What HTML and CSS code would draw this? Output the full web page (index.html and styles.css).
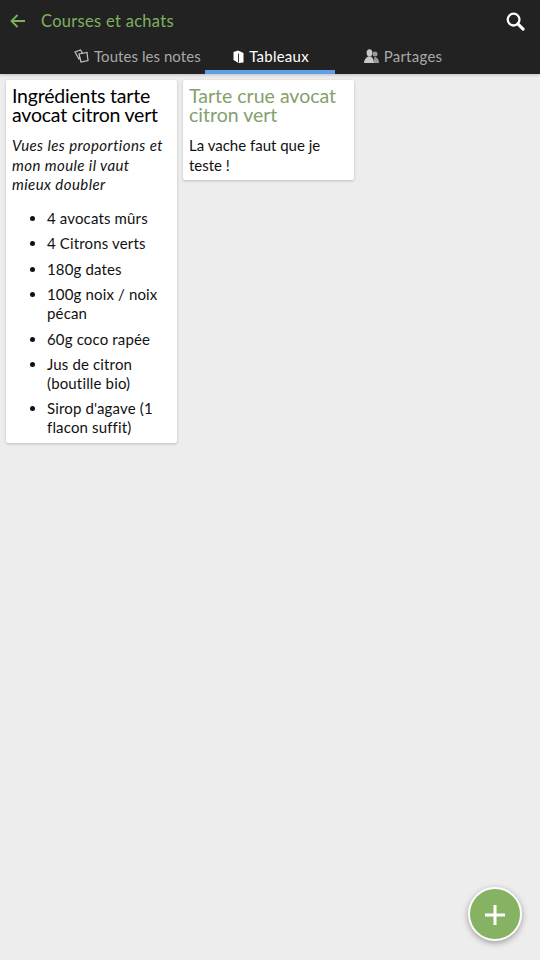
FILE: index.html
```html
<!DOCTYPE html>
<html lang="fr">
<head>
<meta charset="utf-8">
<title>Courses et achats</title>
<link rel="stylesheet" href="styles.css">
</head>
<body>
<header class="appbar">
  <div class="toolbar">
    <svg class="back" viewBox="0 0 15 14" width="15" height="14"><path d="M15 7H1.500M7.500 1 1.500 7l6 6" fill="none" stroke="#7db25f" stroke-width="1.800"/></svg>
    <span class="heading">Courses et achats</span>
    <svg class="search" viewBox="0 0 20 20" width="19" height="19"><circle cx="8" cy="8" r="6.200" fill="none" stroke="#fff" stroke-width="2.400"/><path d="M12.500 12.500 18 18" stroke="#fff" stroke-width="3.200" stroke-linecap="round"/></svg>
  </div>
  <nav class="tabs">
    <div class="tab tab-first">
      <svg class="tab-icon" viewBox="0 0 15 14" width="15" height="14"><path d="M1 3 6.500 1 9 5 5 10Z" fill="none" stroke="#c4c4c4" stroke-width="1.200"/><path d="M5 5 13 3.500 14 11.500 7 13Z" fill="#222" stroke="#c4c4c4" stroke-width="1.200"/></svg>
      <span>Toutes les notes</span>
    </div>
    <div class="tab active">
      <svg class="tab-icon" viewBox="0 0 11 13" width="11" height="13"><path d="M0.500 2 5 0.500 10.500 3V12.500L5.500 13 0.500 10Z" fill="#fff"/><path d="M5.500 3.500V12.500" stroke="#222" stroke-width=".9"/></svg>
      <span>Tableaux</span>
    </div>
    <div class="tab tab-last">
      <svg class="tab-icon" viewBox="0 0 15 14" width="15" height="14"><circle cx="11" cy="5" r="2.500" fill="#9a9a9a"/><path d="M10 14c0-2 0-4 .5-6 2.500 0 4.500 2.500 4.500 6Z" fill="#9a9a9a"/><ellipse cx="5.500" cy="3.800" rx="2.900" ry="3.600" fill="#c8c8c8"/><path d="M0 14c0-3 1.500-5 4-6.500h3c2 1.500 3 3.500 3 6.500Z" fill="#c8c8c8"/></svg>
      <span>Partages</span>
    </div>
  </nav>
</header>
<main class="board">
  <article class="card">
    <h2 class="card-title tight">Ingrédients tarte avocat citron vert</h2>
    <p class="card-text"><em class="note">Vues les proportions et mon moule il vaut mieux doubler</em></p>
    <ul class="card-list">
      <li>4 avocats mûrs</li>
      <li>4 Citrons verts</li>
      <li>180g dates</li>
      <li>100g noix / noix pécan</li>
      <li>60g coco rapée</li>
      <li>Jus de citron (boutille bio)</li>
      <li>Sirop d'agave (1 flacon suffit)</li>
    </ul>
  </article>
  <article class="card">
    <h2 class="card-title green">Tarte crue avocat citron vert</h2>
    <p class="card-text">La vache faut que je teste !</p>
  </article>
</main>
<button class="fab" type="button" aria-label="Ajouter"><svg viewBox="0 0 20 20" width="20" height="20"><path d="M10 0V20M0 10H20" stroke="#fff" stroke-width="3"/></svg></button>
</body>
</html>
```
FILE: styles.css
```css
* { box-sizing: border-box; }
html, body { height: 100%; }
body {
  margin: 0;
  background: #ededed;
  font-family: Lato, "Open Sans", sans-serif;
  color: #111;
  overflow: hidden;
}
.appbar {
  height: 74px;
  background: #222;
  display: flex;
  flex-direction: column;
  box-shadow: 0 1px 3px rgba(0,0,0,.2);
}
.toolbar {
  height: 42px;
  display: flex;
  align-items: center;
  padding: 0 15px 0 10px;
}
.back { flex: none; }
.heading {
  margin-left: 16px;
  font-size: 16.500px;
  letter-spacing: .3px;
  color: #7db25f;
  flex: 1;
}
.tabs {
  height: 32px;
  display: flex;
  justify-content: center;
}
.tab {
  width: 130px;
  display: flex;
  align-items: center;
  justify-content: center;
  gap: 5px;
  font-size: 15px;
  letter-spacing: .25px;
  color: #a8a8a8;
  padding-bottom: 4px;
  white-space: nowrap;
}
.tab-icon { flex: none; }
.tab-first {
  justify-content: flex-start;
  letter-spacing: .06px;
}
.tab-first .tab-icon { margin-left: -1px; }
.tab-last { padding-left: 6px; }
.tab.active {
  color: #fff;
  border-bottom: 4px solid #5f9fe6;
  padding: 0 0 0 2px;
}
.board {
  display: grid;
  grid-template-columns: repeat(3, 171px);
  gap: 6px;
  align-items: start;
  padding: 6px;
}
.card {
  background: #fff;
  border-radius: 2px;
  padding: 6px 6px 5px;
  box-shadow: 0 1px 3px rgba(0,0,0,.2);
}
.card-title {
  margin: 0;
  font-size: 19.500px;
  font-weight: 400;
  line-height: 19px;
  color: #000;
}
.card-title.tight { letter-spacing: -.2px; }
.card-title.green { color: #84a06c; }
.card-text {
  margin: 12px 0 0;
  font-size: 15px;
  line-height: 19.500px;
}
.note { letter-spacing: .42px; }
.card-list {
  margin: 14.600px 0 0;
  padding: 0 0 1px 35px;
  font-size: 15px;
  line-height: 19px;
  letter-spacing: .15px;
}
.card-list li { margin-bottom: 6.400px; }
.card-list li:last-child { margin-bottom: 0; }
.fab {
  position: fixed;
  right: 18px;
  bottom: 19px;
  width: 54px;
  height: 54px;
  padding: 2px 0 0;
  border: 2px solid #fff;
  border-radius: 50%;
  background: #86b263;
  display: flex;
  align-items: center;
  justify-content: center;
  box-shadow: 0 2px 6px rgba(0,0,0,.35);
}
```
